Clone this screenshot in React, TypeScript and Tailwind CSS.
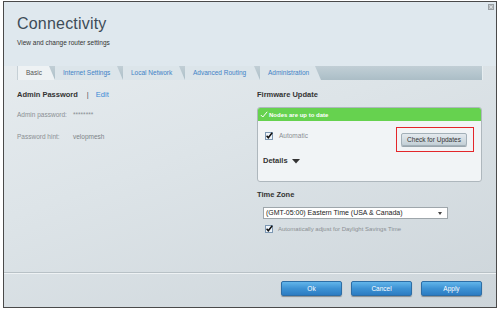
import React from "react";

function Check() {
  return (
    <svg width="8" height="8" viewBox="0 0 8 8" className="shrink-0">
      <rect x="0.5" y="0.5" width="7" height="7" fill="#eef4fa" stroke="#7d98b3" />
      <path d="M1.6 3.8 L3.3 5.8 L7.2 0.8" stroke="#111" strokeWidth="1.5" fill="none" />
    </svg>
  );
}

const tabs = [
  { label: "Basic", w: "w-[38px]", active: true },
  { label: "Internet Settings", w: "w-[68px]", active: false },
  { label: "Local Network", w: "w-[62px]", active: false },
  { label: "Advanced Routing", w: "w-[75px]", active: false },
  { label: "Administration", w: "w-[61px]", active: false },
];

export default function App() {
  return (
    <div className="w-[500px] h-[309px] bg-white pl-[3px] pt-[1px] font-['Liberation_Sans',Arial,sans-serif]">
      <div className="w-[494px] h-[307px] border border-[#4a4a4a] flex flex-col bg-[linear-gradient(160deg,#e9eef1_0%,#dde4e8_45%,#cdd5da_100%)]">
        {/* header */}
        <div className="relative h-[64px] shrink-0 bg-[#dfe8ee] pl-[13px] pt-[14px]">
          <div className="text-[16px] leading-[16px] text-[#3e4c58] tracking-[0.2px]">Connectivity</div>
          <div className="mt-[7px] text-[6.5px] leading-[8px] text-[#333]">View and change router settings</div>
          <div className="absolute top-[2px] right-[2px] w-[6px] h-[6px] bg-[#b3b8bb] border border-[#9aa0a4] flex items-center justify-center">
            <svg width="4" height="4" viewBox="0 0 4 4">
              <path d="M0.5 0.5 L3.5 3.5 M3.5 0.5 L0.5 3.5" stroke="#e6e9eb" strokeWidth="0.8" />
            </svg>
          </div>
        </div>
        {/* tab bar */}
        <div className="h-[14px] shrink-0 ml-[13px] mr-[13px] flex bg-[linear-gradient(180deg,#c1ced5_0%,#b4c5cd_60%,#abbdc6_100%)] border-r border-[#e6edf0]">
          {tabs.map((t) => (
            <div
              key={t.label}
              className={
                "h-full " +
                t.w +
                " shrink-0 pl-[8px] flex items-center text-[6.5px] leading-[8px] [clip-path:polygon(0_0,calc(100%_-_6px)_0,100%_100%,0_100%)] " +
                (t.active
                  ? "bg-[#eef2f4] text-[#555] border-l border-[#c6d0d6]"
                  : "bg-[#dce5ea] text-[#3f82c6]")
              }
            >
              {t.label}
            </div>
          ))}
        </div>
        {/* content */}
        <div className="h-[192px] shrink-0 pt-[10px] pl-[13px] pr-[13px] grid grid-cols-[240px_225px]">
          <div>
            <div className="flex items-center text-[7.5px] leading-[10px]">
              <span className="font-bold text-[#333]">Admin Password</span>
              <span className="ml-[9px] text-[#555]">|</span>
              <span className="ml-[7px] text-[#3a8ad6]">Edit</span>
            </div>
            <div className="mt-[10px] flex text-[6.5px] leading-[10px] text-[#8a8f93]">
              <span className="w-[56px]">Admin password:</span>
              <span>********</span>
            </div>
            <div className="mt-[12px] flex text-[6.5px] leading-[10px] text-[#8a8f93]">
              <span className="w-[56px]">Password hint:</span>
              <span className="text-[#7d8387]">velopmesh</span>
            </div>
          </div>
          <div>
            <div className="text-[7.5px] leading-[10px] font-bold text-[#333]">Firmware Update</div>
            <div className="mt-[7px] h-[75px] border border-[#aeb7bd] rounded-[3px] bg-[#f1f4f6] overflow-hidden">
              <div className="h-[13px] bg-[#66d24f] flex items-center pl-[2px] text-white font-bold text-[6px] leading-[8px]">
                <svg width="8" height="7" viewBox="0 0 8 7" className="mr-[1px]">
                  <path d="M0.8 4 L2.8 6 L7.2 0.8" stroke="#fff" strokeWidth="1" fill="none" />
                </svg>
                Nodes are up to date
              </div>
              <div className="flex justify-between pl-[7px] pr-[7px] pt-[6px]">
                <div className="flex items-center h-[10px] mt-[4px] text-[6.5px] leading-[10px] text-[#8a8f93]">
                  <Check />
                  <span className="ml-[6px]">Automatic</span>
                </div>
                <div className="border border-[#e3262a] pl-[4px] pr-[6px] py-[5px]">
                  <div className="w-[66px] h-[13px] rounded-[2px] border border-[#a3b0b8] bg-[linear-gradient(180deg,#e4eaee_0%,#c3cfd6_100%)] flex items-center justify-center text-[6.5px] leading-[8px] text-[#333] shadow-[0_1px_0_#9aa6ad]">
                    Check for Updates
                  </div>
                </div>
              </div>
              <div className="pl-[5px] mt-[4px] flex items-center text-[7.5px] leading-[10px] font-bold text-[#333]">
                Details
                <svg width="8" height="5" viewBox="0 0 8 5" className="ml-[4px]">
                  <path d="M0 0 L8 0 L4 4.5 Z" fill="#333" />
                </svg>
              </div>
            </div>
            <div className="mt-[8px] text-[7.5px] leading-[10px] font-bold text-[#333]">Time Zone</div>
            <div className="mt-[7px] ml-[6px] w-[185px] h-[12px] bg-white border border-[#9ea6ab] flex items-center justify-between pl-[2px] pr-[5px] text-[7px] leading-[10px] text-[#222]">
              <span>(GMT-05:00) Eastern Time (USA &amp; Canada)</span>
              <svg width="4" height="3" viewBox="0 0 4 3">
                <path d="M0 0 L4 0 L2 3 Z" fill="#444" />
              </svg>
            </div>
            <div className="mt-[5px] ml-[8px] flex items-center h-[10px] text-[6px] leading-[10px] text-[#8a8f93]">
              <Check />
              <span className="ml-[5px]">Automatically adjust for Daylight Savings Time</span>
            </div>
          </div>
        </div>
        {/* separator */}
        <div className="h-[2px] shrink-0 border-t border-[#b8c1c6] bg-[#eef2f4]"></div>
        {/* footer */}
        <div className="flex-1 flex justify-end items-start pt-[7px] pr-[14px] gap-[9px]">
          {["Ok", "Cancel", "Apply"].map((b) => (
            <div
              key={b}
              className="w-[61px] h-[15px] rounded-[2px] border border-[#2d6ea6] bg-[linear-gradient(180deg,#62b5ea_0%,#3d92d4_50%,#2c7cc2_100%)] flex items-center justify-center text-white text-[6.5px] leading-[8px] shadow-[0_1px_1px_rgba(0,0,0,0.35)]"
            >
              {b}
            </div>
          ))}
        </div>
      </div>
    </div>
  );
}
